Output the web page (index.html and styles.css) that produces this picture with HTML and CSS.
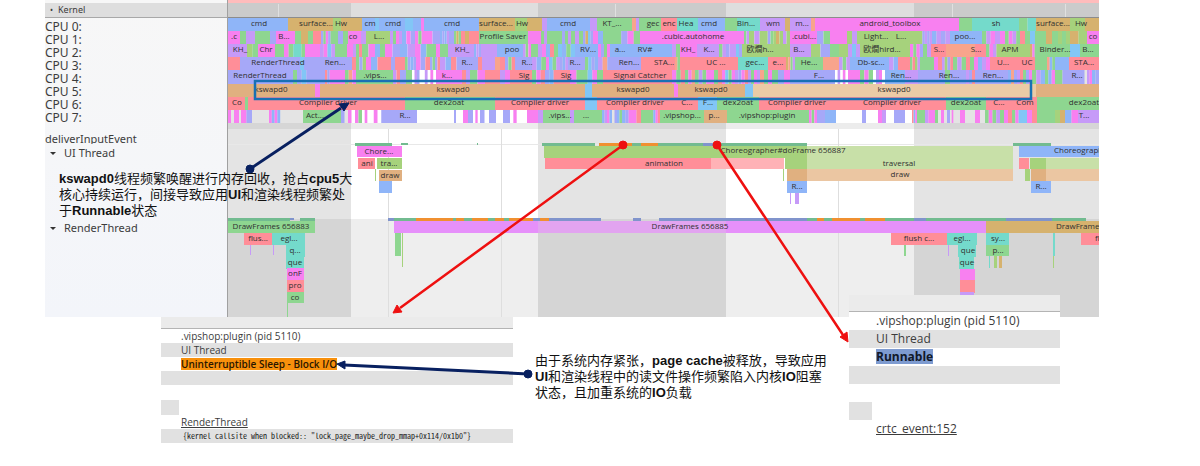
FILE: index.html
```html
<!DOCTYPE html>
<html lang="zh-CN">
<head>
<meta charset="utf-8">
<title>Systrace – kswapd0</title>
<link rel="stylesheet" href="styles.css">
</head>
<body>
<main class="board">
  <section class="trace">
    <div class="tracks">
      <div class="kernel"><button class="toggle" type="button"><span class="dot">•</span>Kernel</button></div>
      <ul class="cpus">
        <li>CPU 0:</li><li>CPU 1:</li><li>CPU 2:</li><li>CPU 3:</li>
        <li>CPU 4:</li><li>CPU 5:</li><li>CPU 6:</li><li>CPU 7:</li>
      </ul>
      <div class="event">deliverInputEvent</div>
      <div class="thread ui"><button class="toggle" type="button"><span class="caret"></span>UI Thread</button></div>
      <div class="thread"><button class="toggle" type="button"><span class="caret"></span>RenderThread</button></div>
    </div>
    <svg class="timeline" id="timeline" viewBox="228 0 871 317" role="img" aria-label="Timeline"></svg>
  </section>

  <section class="details">
    <div class="card small">
      <div class="head"></div>
      <div class="row">.vipshop:plugin (pid 5110)</div>
      <div class="row shade">UI Thread</div>
      <div class="row"><strong class="sleep">Uninterruptible Sleep - Block I/O</strong></div>
      <div class="row shade"></div>
      <div class="row gap"></div>
      <div class="row gap"><span class="chip"></span></div>
      <div class="row"><a href="#render">RenderThread</a></div>
      <div class="row shade"><code>{kernel callsite when blocked:: "lock_page_maybe_drop_mmap+0x114/0x1b0"}</code></div>
    </div>
    <p class="note cause">由于系统内存紧张，<b>page cache</b>被释放，导致应用<br><b>UI</b>和渲染线程中的读文件操作频繁陷入内核<b>IO</b>阻塞<br>状态，且加重系统的<b>IO</b>负载</p>
    <div class="card large">
      <div class="head"></div>
      <div class="row">.vipshop:plugin (pid 5110)</div>
      <div class="row shade">UI Thread</div>
      <div class="row"><strong class="runnable">Runnable</strong></div>
      <div class="row shade"></div>
      <div class="row"></div>
      <div class="row"><span class="chip"></span></div>
      <div class="row"><a href="#crtc">crtc_event:152</a></div>
    </div>
  </section>

  <p class="note swap"><b>kswapd0</b>线程频繁唤醒进行内存回收，抢占<b>cpu5</b>大<br>核心持续运行，间接导致应用<b>UI</b>和渲染线程频繁处<br>于<b>Runnable</b>状态</p>

  <svg class="arrows" viewBox="0 0 1200 466" aria-hidden="true">
    <g fill="#082060" stroke="#082060">
      <path d="M250 169L341 108M528 374L344 365" stroke-width="3" fill="none"/>
      <circle cx="250" cy="169" r="4"/><circle cx="528" cy="374" r="4"/>
      <path d="M349 103L344 111L339 104Z"/><path d="M337 364L345 361L345 369Z"/>
    </g>
    <g fill="#ee1010" stroke="#ee1010">
      <path d="M623 145L400 308M717 145L843 335" stroke-width="2.5" fill="none"/>
      <circle cx="623" cy="145" r="4"/><circle cx="717" cy="145" r="4"/>
      <path d="M393 313L397 305L402 312Z"/><path d="M848 342L840 337L847 332Z"/>
    </g>
  </svg>
</main>
<script src="timeline.js"></script>
</body>
</html>
```
FILE: styles.css
```css
* { box-sizing: border-box; }
body { margin: 0; background: #fff; color: #3c3c3c; font-family: "Noto Sans", "Open Sans", sans-serif; }
.board { position: relative; min-height: 466px; }
.trace { display: grid; grid-template-columns: 183px 1fr; padding: 0 101px 0 45px; }
.tracks { background: linear-gradient(#f7f7f7, #f3f5fa); border-right: 1px solid #a0a0a0; font-size: 12px; }
.kernel { height: 15px; margin-top: 3px; background: #dedede; border-bottom: 1px solid #a8a8a8; font-size: 9px; line-height: 14px; }
.toggle { display: flex; align-items: center; border: 0; padding: 0 0 0 5px; background: none; color: inherit; font: inherit; line-height: inherit; }
.dot { width: 8px; font-size: 8px; text-align: left; }
.cpus { list-style: none; margin: 0; padding: 2px 0 0; line-height: 13px; }
.event { margin-top: 8px; height: 12px; overflow: hidden; line-height: 13px; font: 11px/13px "Noto Sans", sans-serif; }
.thread { line-height: 16px; font-size: 11px; }
.ui { margin-top: 1px; margin-bottom: 59px; }
.caret { width: 0; height: 0; margin-right: 8px; border: 3px solid transparent; border-top: 3px solid #333; border-bottom: 0; }
.timeline { display: block; width: 100%; height: auto; }
.timeline text { font-family: "Open Sans", "Noto Sans CJK SC", sans-serif; font-size: 8px; fill: #303030; }
.details { display: grid; grid-template-columns: 352fr 336fr 211fr; padding: 0 140px 0 161px; align-items: start; }
.card { background: #fff; white-space: nowrap; font-family: "Open Sans", "Noto Sans", sans-serif; }
.head { background: #ebebeb; border-bottom: 1px solid #b4b4b4; }
.shade { background: #e1e1e1; }
.chip { display: block; height: 100%; background: #e1e1e1; }
.card a { color: inherit; }
.small { font-size: 10px; }
.small .head { height: 12px; }
.small .row { height: 14px; line-height: 14px; padding-left: 20px; }
.small .gap { height: 15px; }
.small .chip { width: 18px; margin-left: -20px; }
.small code { font: 8px/14px "Noto Sans Mono CJK SC", "Liberation Mono", monospace; color: #222; padding-left: 2px; display: block; }
.large { position: relative; margin-top: -22px; font-size: 12px; }
.large .head { height: 17px; }
.large .row { height: 18px; line-height: 18px; padding-left: 27px; }
.large .chip { width: 23px; margin-left: -27px; }
.sleep, .runnable { display: inline-block; font-weight: 600; color: #2a1600; }
.sleep { background: #f8900c; line-height: 12px; }
.runnable { background: #7e9bd0; color: #101828; line-height: 15px; font-weight: 700; }
.note { margin: 0; font: 13px/16px "Liberation Sans", "Noto Sans CJK SC", sans-serif; color: #111; white-space: nowrap; }
.cause { padding: 36px 0 0 22px; }
.swap { position: absolute; left: 59px; top: 171px; }
.arrows { position: absolute; left: 0; top: 0; width: 100%; height: auto; pointer-events: none; }
```
FILE: timeline.js
```js
const COLORS = {
  b: "#8fb5f8", t: "#d6b26e", g: "#8ed690", m: "#f880f0", r: "#ff8e98", p: "#c69af8",
  v: "#a6a8f8", e: "#74dacb", c: "#82c6f6", o: "#e0b080", l: "#a6d27c", s: "#f8a48c",
  S: "#ebcba6", K: "#c8e0a8", J: "#ffb2b6", O: "#ebc6a2", d: "#e690fa", D: "#e2a4f0",
  G: "#72bb90", B: "#8094cc", F: "#f09030"
};
const END = 1099;
const svg = document.getElementById("timeline");

function add(tag, attrs, text) {
  const el = document.createElementNS("http://www.w3.org/2000/svg", tag);
  for (const key in attrs) el.setAttribute(key, attrs[key]);
  if (text) el.textContent = text;
  svg.appendChild(el);
}
function box(x, y, w, h, fill) {
  add("rect", { x, y, width: w, height: h, fill });
}
function label(x, y, text, anchor = "middle") {
  add("text", { x, y, "text-anchor": anchor }, text);
}

// Alternating time bands: [from, to, dark]
[[228, 351, 1], [351, 538, 0], [538, 726, 1], [726, 914, 0], [914, 1099, 1]].forEach(([a, b, dark]) => {
  const w = b - a;
  box(a, 0, w, 317, dark ? "#e4e4e4" : "#ffffff");
  box(a, 3, w, 15, dark ? "#cbcbcb" : "#dedede");
  box(a, 123, w, 6, dark ? "#d6d6d6" : "#ececec");
  box(a, 219, w, 98, dark ? "#d5d5d5" : "#eeeeee");
});
box(228, 0, 871, 3, "#ffbcbc");
box(228, 17, 871, 1, "#8c8c8c");
box(228, 144, 871, 1, "#e8e8e8");
[388, 501, 838].forEach(x => box(x, 129, 1, 188, "#dedede"));
[278, 615, 952, 1065].forEach(x => box(x, 4, 1, 13, "#e0e0e0"));

// Each token is a start x and the colours that share the span up to the next token.
const cpus = [
  [18, "228b 288t 333l 341t 362b 375cb 383b 405cb 421m 424b 479t 515l 527t 542p 547b 590p 597g 632s 636pg 642g 661r 677e 698b 725g 737e 760p 785t 790p 811s 815m 959g 972e 1019ge 1036t 1070l 1085t",
    "259 cmd|316 surface...|341 Hw|370 cm|393 cmd|452 cmd|496 surface...|522 Hw|568 cmd|612 KT_...|653 gec|669 enc|686 Hea|709 cmd|746 Bin...|773 wm|802 m...|890 android_toolbox|996 sh|1053 surface...|1081 Hw"],
  [31, "228m 240g 246p 255g 270v 276m 295g 301t 308g 313r 321vgmvg 333gvg 348m 361p 366l 390pgmp 402bmv 415mgm 425mv 440bvbp 449v 454gtg 461rt 469r 479g 528m 541gpg 550g 562vgp 571gpg 583vtcv 593mb 603g 615gvmg 640m 744gp 749lpl 765lvgl 776tlpl 790m 817vg 830m 847lpl 862l 920lvpvp 932bpvp 950b 982gpm 995pm 1005gmpg 1020rg 1030cg 1040gtg 1058lgl 1070tl 1087m",
    "234 .c|284 B...|353 co|379 L...|503 Profile Saver|693 .cubic.autohome|804 .cubi...|876 Light...|901 L...|965 poo...|1093 co"],
  [44, "228p 247lg 258m 275g 284mge 298eg 305m 320pmcp 335g 347m 353pgr 362gm 375bg 385mv 400bp 415mbg 432gm 440g 448p 474bpv 481p 497b 523pgm 531g 538pmb 550rgc 562bgc 575b 598mvgm 610b 672pg 680m 697p 719gpvp 733pcv 742l 790p 811lv 830gl 848pcp 860l 910mgmv 923gpr 935r 946s 975r 986gmpl 1000l 1030tmg 1037g 1070c 1080g",
    "240 KH_|266 Chr|462 KH_|512 poo|588 RV...|620 a...|645 RV#|688 KH_|709 K...|760 欧燗h...|799 B...|882 欧燗hird...|939 S...|976 S...|1010 APM|1055 Binder...|1088 B..."],
  [57, "228r 240v 300c 304v 352r 356gvl 366m 371br 384r 391vr 399r 405gvbv 416mvr 430vgvr 440pbrv 462v 478rp 486p 495sr 505vgr 515v 532pbg 546m 549cgp 560vbp 568v 585gcvb 598psv 612v 641r 675sg 680r 738e 768r 786tsgp 795g 823s 839pgp 850b 889pb 898r 910grlp 920g 930gmr 942plvr 953gpg 966rgm 978bpm 990r 1035g 1047sbg 1055b 1069r",
    "278 RenderThread|335 Ren...|467 R...|527 R...|575 R...|629 Ren...|664 STA...|716 UC ...|755 gec...|778 e...|809 He...|871 Db-sc...|1003 U...|1027 UC|1084 STA..."],
  [70, "228v 293g 297vcv 311v 325rvm 332m 345gsm 356g 393pr 400vg 412_pv_ 422_p_m_ 436m 462rp 470gm 485r 500pmr 515r 532gmr 545vbr 558r 570mg 583gcm 597g 603r 672mgr 685gms 695gpgm 710mgr 722mcgm 735pvmr 748pgmp 760sgm 772gvm 790v 835_p_m_ 848m 860gmg 873_pm_ 885b 905p 918v 940vg 950v 963vpvr 975v 1008bsvp 1020rgvm 1032gpb 1045gbm 1055gv 1070v 1082v_pm 1092bv",
    "260 RenderThread|375 .vips...|447 k...|524 Sig|566 Sig|640 Signal Catcher|819 F...|901 Ren...|949 Ren...|993 Ren...|1077 R..."],
  [84, "228o 315m 320o 585c 592o 674m 678o 745c 753S 1036o",
    "271 kswapd0|453 kswapd0|633 kswapd0|711 kswapd0|894 kswapd0"],
  [97, "228r 245g 248r 405g 495r 585c 597r 698c 717g 759r 946g 986r 1037g",
    "237 Co|328 Compiler driver|449 dex2oat|540 Compiler driver|635 Compiler driver|687 C...|708 F...|738 dex2oat|797 Compiler driver|892 Compiler driver|966 dex2oat|999 C...|1025 Com|1084 dex2oat"],
  [110, "228m_ 234m 239_ 241mv 252_ 269mbmb_ 283_ 288_ 303g 341v_m_ 355mg 362_m_ 370_m_v 385v 417_ 454v_ 458_ 463mv 473_m_ 480v_ 489v 496_ 503v 510_m_ 520_ 527m 538p 543g 570pg 578g 602bpmb 612_vbg 622bvm 632mr 641g 651gbmr 660g 704o 727g 809mgm 817v 825b 836_ 862v 866_ 878mp 886_ 894v 905_ 912rbm 917g 925pm 932mg 938_m_v 950_m_ 955_ 960m_ 970_m_ 985gmgp 1000gmr 1012gmc 1022cmr 1037g 1055lt 1065bm 1078p",
    "315 Act...|405 R...|560 .vips...|586 ...|682 .vipshop...|714 p...|767 .vipshop:plugin|1084 T..."]
];
cpus.forEach(([y, spans, labels]) => {
  const tokens = spans.split(" ").map(s => [parseInt(s, 10), s.replace(/^\d+/, "")]);
  tokens.forEach(([x, codes], i) => {
    const stop = i + 1 < tokens.length ? tokens[i + 1][0] : END;
    const step = (stop - x) / codes.length;
    [...codes].forEach((code, n) => {
      if (code !== "_") box(x + n * step, y, step, y === 70 ? 14 : 13, COLORS[code]);
    });
  });
  labels.split("|").forEach(s => {
    const cut = s.indexOf(" ");
    label(+s.slice(0, cut), y + 8, s.slice(cut + 1));
  });
});
add("rect", { x: 255, y: 81, width: 776, height: 18, fill: "none", stroke: "#1870b4", "stroke-width": 2.5 });

// Slices: from, to, top, height, colour, label, label centre
const slices = [
  [355, 392, 143, 3, "G"], [401, 408, 143, 2, "G"], [477, 478, 143, 2, "G"],
  [542, 595, 143, 3, "G"], [599, 632, 143, 3, "F"], [632, 641, 143, 3, "G"], [641, 658, 143, 3, "F"],
  [658, 703, 143, 3, "G"], [703, 717, 143, 3, "B"], [717, 807, 143, 3, "G"], [1013, 1051, 143, 3, "G"],
  [357, 402, 146, 11, "m", "Chore...", 379], [358, 375, 158, 11, "r", "ani", 367],
  [377, 402, 158, 11, "l", "tra...", 389], [379, 402, 170, 11, "o", "draw", 390],
  [375, 376, 169, 12, "l"], [379, 392, 181, 12, "b"],
  [544, 807, 146, 12, "l"], [807, 1013, 146, 12, "K"], [545, 711, 158, 11, "r", "animation", 664],
  [711, 784, 158, 11, "J"], [785, 807, 158, 11, "l"], [807, 1013, 158, 11, "K", "traversal", 899],
  [787, 807, 169, 12, "o"], [807, 1013, 169, 12, "O", "draw", 900], [783, 784, 169, 12, "l"],
  [787, 807, 181, 12, "b", "R...", 797], [790, 791, 193, 11, "p"], [795, 799, 193, 11, "p"],
  [1019, 1099, 146, 11, "b"], [1019, 1029, 158, 11, "r"], [1030, 1046, 158, 11, "l"], [1046, 1099, 158, 11, "K"],
  [1025, 1030, 169, 12, "l"], [1031, 1046, 169, 12, "o"], [1046, 1099, 169, 12, "O"], [1031, 1051, 181, 12, "b", "R...", 1041],

  [228, 290, 218, 3, "G"], [290, 294, 218, 2, "B"], [300, 315, 218, 3, "G"],
  [388, 394, 218, 3, "B"], [394, 416, 218, 3, "G"], [416, 453, 218, 3, "F"], [453, 456, 218, 3, "G"],
  [456, 464, 218, 3, "F"], [464, 472, 218, 3, "G"], [472, 488, 218, 3, "F"], [488, 495, 218, 3, "G"],
  [495, 504, 218, 3, "F"], [504, 509, 218, 3, "G"], [509, 533, 218, 3, "F"], [533, 540, 218, 3, "B"],
  [540, 549, 218, 3, "F"], [549, 601, 218, 3, "B"], [633, 641, 218, 3, "B"], [659, 807, 218, 3, "B"],
  [807, 817, 218, 3, "G"], [817, 824, 218, 3, "F"], [824, 832, 218, 3, "G"], [832, 860, 218, 3, "F"],
  [860, 865, 218, 3, "G"], [865, 885, 218, 3, "F"], [885, 914, 218, 3, "G"], [914, 926, 218, 3, "B"],
  [926, 1006, 218, 3, "G"], [1006, 1052, 218, 3, "B"], [1052, 1086, 218, 3, "G"],
  [228, 315, 221, 12, "g", "DrawFrames 656883", 271], [244, 272, 233, 12, "r", "flus...", 258],
  [272, 305, 233, 12, "e", "egl...", 289], [286, 305, 245, 12, "e", "q...", 295],
  [286, 304, 257, 12, "e", "que", 295], [287, 304, 268, 12, "m", "onF", 295],
  [287, 304, 280, 12, "r", "pro", 295], [287, 304, 292, 11, "g", "co", 295],
  [250, 251, 245, 10, "p"], [273, 274, 245, 10, "p"], [287, 288, 303, 14, "g"],
  [394, 538, 221, 12, "d"], [538, 726, 221, 12, "D", "DrawFrames 656885", 690],
  [726, 986, 221, 12, "d"], [986, 1099, 221, 12, "t"],
  [395, 401, 233, 23, "g"], [402, 403, 233, 34, "l"],
  [891, 947, 233, 12, "r", "flush c...", 919], [947, 977, 233, 12, "e", "egl...", 962],
  [958, 976, 245, 12, "e", "que", 968], [959, 974, 257, 12, "e", "que", 967],
  [960, 975, 269, 11, "m"], [960, 975, 280, 13, "r"], [960, 974, 292, 3, "p"],
  [904, 906, 245, 11, "g"], [948, 949, 245, 11, "p"],
  [986, 1009, 233, 12, "e", "sy...", 998], [986, 1009, 245, 11, "g", "p...", 998],
  [989, 990, 256, 12, "e"], [994, 997, 256, 12, "l"], [999, 1002, 256, 12, "t"],
  [1053, 1055, 233, 23, "e"], [1053, 1054, 256, 12, "l"], [1081, 1099, 233, 12, "r"]
];
slices.forEach(([a, b, y, h, code]) => box(a, y, b - a, h, COLORS[code]));
slices.forEach(([a, b, y, h, code, text, centre]) => { if (text) label(centre, y + 8, text); });
label(783, 153, "Choreographer#doFrame 656887");
label(1054, 153, "Choreograph", "start");
label(1056, 229, "DrawFrames", "start");
label(1095, 241, "fl", "start");
```
